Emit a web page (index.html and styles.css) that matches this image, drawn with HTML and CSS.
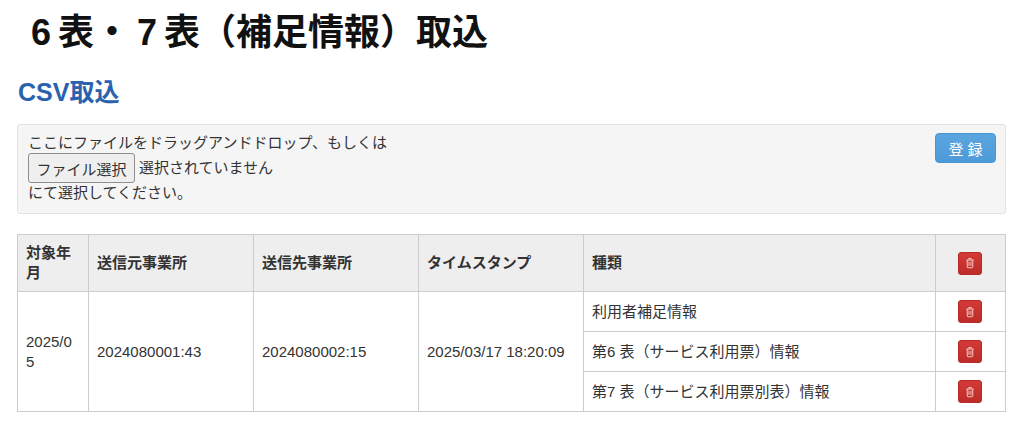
FILE: index.html
```html
<!DOCTYPE html>
<html lang="ja">
<head>
  <meta charset="UTF-8" />
  <title>6表・7表（補足情報）取込</title>
  <link rel="stylesheet" href="styles.css">
</head>
<body>

  <h1>6 表・ 7 表（補足情報）取込</h1>
  <h2>CSV取込</h2>

  <div class="well">
    <div class="drop-text">
      <div>ここにファイルをドラッグアンドドロップ、もしくは</div>
      <div class="file-row"><button class="file-btn">ファイル選択</button> 選択されていません</div>
      <div>にて選択してください。</div>
    </div>
    <button class="btn-register">登 録</button>
  </div>

  <table>
    <colgroup>
      <col class="col-month">
      <col class="col-office">
      <col class="col-office">
      <col class="col-office">
      <col class="col-kind">
      <col class="col-delete">
    </colgroup>
    <thead>
      <tr>
        <th>対象年月</th>
        <th>送信元事業所</th>
        <th>送信先事業所</th>
        <th>タイムスタンプ</th>
        <th>種類</th>
        <th class="cell-delete">
          <button class="btn-delete"><svg viewBox="0 0 12 14"><path d="M1.5 3.5h9M4.5 3.2V1.6h3v1.6M2.7 3.5v8.2q0 1 1 1h4.6q1 0 1-1V3.5M4.8 5.5v5M7.2 5.5v5"/></svg></button>
        </th>
      </tr>
    </thead>
    <tbody>
      <tr>
        <td rowspan="3">2025/05</td>
        <td rowspan="3">2024080001:43</td>
        <td rowspan="3">2024080002:15</td>
        <td rowspan="3">2025/03/17 18:20:09</td>
        <td>利用者補足情報</td>
        <td class="cell-delete">
          <button class="btn-delete"><svg viewBox="0 0 12 14"><path d="M1.5 3.5h9M4.5 3.2V1.6h3v1.6M2.7 3.5v8.2q0 1 1 1h4.6q1 0 1-1V3.5M4.8 5.5v5M7.2 5.5v5"/></svg></button>
        </td>
      </tr>
      <tr>
        <td>第6 表（サービス利用票）情報</td>
        <td class="cell-delete">
          <button class="btn-delete"><svg viewBox="0 0 12 14"><path d="M1.5 3.5h9M4.5 3.2V1.6h3v1.6M2.7 3.5v8.2q0 1 1 1h4.6q1 0 1-1V3.5M4.8 5.5v5M7.2 5.5v5"/></svg></button>
        </td>
      </tr>
      <tr>
        <td>第7 表（サービス利用票別表）情報</td>
        <td class="cell-delete">
          <button class="btn-delete"><svg viewBox="0 0 12 14"><path d="M1.5 3.5h9M4.5 3.2V1.6h3v1.6M2.7 3.5v8.2q0 1 1 1h4.6q1 0 1-1V3.5M4.8 5.5v5M7.2 5.5v5"/></svg></button>
        </td>
      </tr>
    </tbody>
  </table>

</body>
</html>
```

FILE: styles.css
```css
body {
  font-family: "Liberation Sans", "Noto Sans CJK JP", sans-serif;
  font-size: 15px;
  line-height: 20px;
  color: #333;
  background: #fff;
  margin: 0;
  padding: 0 18px 0 17px;
}
h1 {
  font-size: 36px;
  line-height: 40px;
  font-weight: bold;
  word-spacing: -3px;
  color: #111;
  margin: 0;
  padding: 13px 0 0 14px;
}
h2 {
  font-size: 25px;
  line-height: 30px;
  font-weight: bold;
  color: #2a62b0;
  margin: 0;
  padding: 24px 0 0 1px;
}
.well {
  display: flex;
  justify-content: space-between;
  align-items: flex-start;
  margin-top: 17px;
  height: 90px;
  box-sizing: border-box;
  padding: 8px 9px 0 10px;
  background: #f5f5f5;
  border: 1px solid #e3e3e3;
  border-radius: 3px;
}
.file-row {
  height: 30px;
  display: flex;
  align-items: center;
  gap: 4px;
}
.file-btn {
  font-family: inherit;
  font-size: 15px;
  color: #333;
  width: 107px;
  height: 30px;
  padding: 0;
  background: #efefef;
  border: 1px solid #8f8f8f;
  border-radius: 3px;
}
.btn-register {
  font-family: inherit;
  font-size: 15px;
  color: #fff;
  width: 61px;
  height: 30px;
  background: linear-gradient(#5ba6e0, #4d9ad8);
  border: 1px solid #4a94d0;
  border-radius: 4px;
}
table {
  width: 988px;
  margin-top: 20px;
  table-layout: fixed;
  border-collapse: collapse;
  border: 1px solid #ccc;
}
.col-month { width: 71px; }
.col-office { width: 165px; }
.col-kind { width: 352px; }
.col-delete { width: 70px; }
th, td {
  border: 1px solid #ccc;
  text-align: left;
  vertical-align: middle;
  word-break: break-all;
}
th {
  padding: 8px 9px 8px 8px;
  background: #eee;
  font-weight: bold;
}
td {
  padding: 9.5px 9px 9.5px 8px;
}
th.cell-delete, td.cell-delete {
  text-align: center;
  padding: 0 2px 0 0;
}
.btn-delete {
  display: inline-flex;
  align-items: center;
  justify-content: center;
  vertical-align: middle;
  width: 24px;
  height: 23px;
  padding: 0;
  background: linear-gradient(#d33a36, #bd2c29);
  border: 1px solid #b52b27;
  border-radius: 3px;
}
.btn-delete svg {
  width: 10px;
  height: 12px;
  fill: none;
  stroke: #f2c9c7;
  stroke-width: 1.2;
}
```
